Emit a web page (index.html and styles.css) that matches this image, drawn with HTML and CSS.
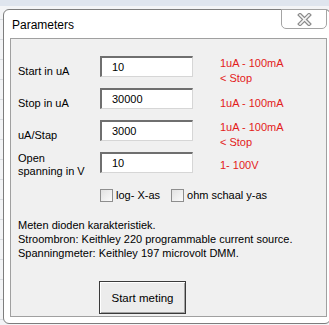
FILE: index.html
```html
<!DOCTYPE html>
<html lang="nl">

<head>
    <meta charset="UTF-8">
    <title>Parameters</title>
    <link rel="stylesheet" href="styles.css">
</head>

<body>

    <div class="dialog">
        <div class="titlebar">
            <span class="title">Parameters</span>
            <button class="close">
                <svg width="15" height="13" viewBox="0 0 15 13">
                    <path d="M3 2 L12 11 M12 2 L3 11" stroke="#8c8c8c" stroke-width="4" stroke-linecap="square" fill="none" />
                    <path d="M3 2 L12 11 M12 2 L3 11" stroke="#f6f6f6" stroke-width="1.6" stroke-linecap="square" fill="none" />
                </svg>
            </button>
        </div>

        <div class="panel">
            <!-- Invoervelden -->
            <div class="fields">
                <div class="row">
                    <label class="label">Start in uA</label>
                    <input class="field" type="text" value="10">
                    <div class="note note-two">1uA - 100mA<br>&lt; Stop</div>
                </div>
                <div class="row">
                    <label class="label">Stop in uA</label>
                    <input class="field" type="text" value="30000">
                    <div class="note">1uA - 100mA</div>
                </div>
                <div class="row">
                    <label class="label">uA/Stap</label>
                    <input class="field" type="text" value="3000">
                    <div class="note note-two">1uA - 100mA<br>&lt; Stop</div>
                </div>
                <div class="row">
                    <label class="label label-two">Open<br>spanning in V</label>
                    <input class="field" type="text" value="10">
                    <div class="note note-mid">1- 100V</div>
                </div>
            </div>

            <div class="checks">
                <span class="check"><span class="box"></span>log- X-as</span>
                <span class="check"><span class="box"></span>ohm schaal y-as</span>
            </div>

            <p class="info">
                Meten dioden karakteristiek.<br>
                Stroombron: Keithley 220 programmable current source.<br>
                Spanningmeter: Keithley 197 microvolt DMM.
            </p>

            <button class="start">Start meting</button>
        </div>
    </div>

</body>

</html>
```

FILE: styles.css
```css
body {
    margin: 0;
    height: 325px;
    overflow: hidden;
    font-family: 'Liberation Sans', Arial, sans-serif;
    font-size: 11px;
    color: #000;
    /* Excel sheet achter het venster */
    background-color: #f3f4f6;
    background-image:
        linear-gradient(#dfe5ee, #dfe5ee),
        repeating-linear-gradient(#f3f4f6 0 19px, #d9dce0 19px 20px);
    background-size: 100% 6px, 100% 100%;
    background-repeat: no-repeat, repeat;
}

/* Venster */
.dialog {
    box-sizing: border-box;
    width: 328px;
    height: 315px;
    margin: 9px 0 0 3px;
    padding: 0 3px 6px 6px;
    background: #fff;
    border: 1px solid #7d7d7d;
    border-radius: 6px;
    display: flex;
    flex-direction: column;
}

.titlebar {
    height: 28px;
    display: flex;
    justify-content: space-between;
    align-items: flex-start;
}

.title {
    font-size: 12px;
    padding: 8px 0 0 2px;
}

.close {
    width: 46px;
    height: 20px;
    margin-top: -1px;
    padding: 0;
    background: #fff;
    border: 1px solid #a4a4a4;
    border-radius: 0 0 5px 5px;
    display: flex;
    justify-content: center;
    align-items: center;
}

/* Grijs paneel */
.panel {
    flex: 1;
    background: #f0f0f0;
    border: 1px solid #a0a0a0;
    padding: 17px 0 0 7px;
}

.row {
    height: 32px;
    display: flex;
    align-items: flex-start;
}

.label {
    width: 82px;
    padding-top: 8px;
    line-height: 14px;
}

.label-two {
    padding-top: 0;
    line-height: 13.4px;
}

.field {
    box-sizing: border-box;
    width: 93px;
    height: 21px;
    margin: 0;
    padding: 0 0 0 10px;
    font: inherit;
    background: #fff;
    border-top: 2px solid #6f6f6f;
    border-left: 2px solid #6f6f6f;
    border-right: 1px solid #d6d6d6;
    border-bottom: 1px solid #d6d6d6;
}

.note {
    margin-left: 27px;
    padding-top: 8px;
    line-height: 14px;
    color: #e31b1b;
}

.note-two {
    padding-top: 0;
    line-height: 15px;
}

.note-mid {
    padding-top: 6px;
}

/* Selectievakjes */
.checks {
    display: flex;
    gap: 11px;
    margin: 4px 0 0 82px;
    height: 14px;
    line-height: 14px;
}

.check {
    display: flex;
    align-items: center;
    gap: 3px;
}

.box {
    box-sizing: border-box;
    width: 13px;
    height: 13px;
    border: 1px solid #8e8e8e;
    background: linear-gradient(135deg, #e2e2e2, #fbfbfb);
}

.info {
    margin: 16px 0 0;
    line-height: 14px;
}

.start {
    box-sizing: border-box;
    width: 87px;
    height: 33px;
    margin: 21px 0 0 81px;
    font: inherit;
    font-size: 11.5px;
    color: #000;
    background: #ececec;
    border: 1px solid #3a3a3a;
    box-shadow: inset 1px 1px #fff, inset -1px -1px #a3a3a3;
}
```
